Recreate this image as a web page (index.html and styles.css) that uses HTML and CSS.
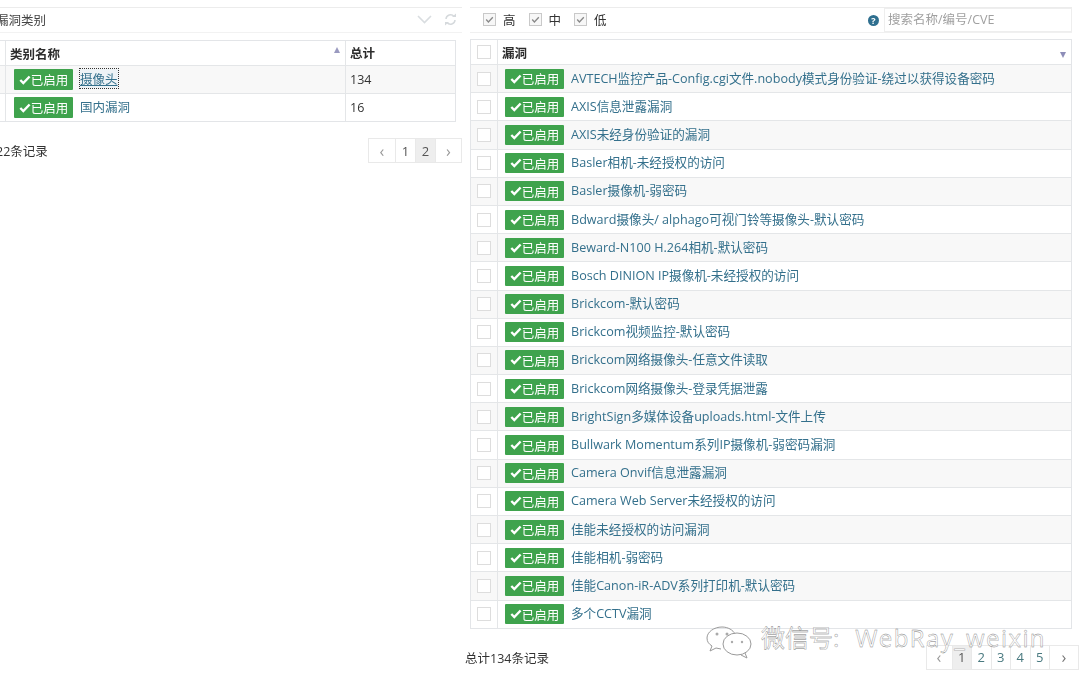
FILE: index.html
```html
<!DOCTYPE html>
<html lang="zh">
<head>
<meta charset="utf-8">
<title>漏洞类别</title>
<link rel="stylesheet" href="styles.css">
</head>
<body>
<div class="page">
  <section class="left">
    <div class="panel-head">
      <span class="panel-title">漏洞类别</span>
      <span class="tools">
        <svg class="ico" width="15" height="9" viewBox="0 0 15 9"><path d="M1 1l6.5 6.5L14 1" fill="none" stroke="#d9dde0" stroke-width="1.6"/></svg>
        <svg class="ico" width="13" height="13" viewBox="0 0 13 13"><path d="M2 6a4.5 4.5 0 0 1 8-2.5M11 7a4.5 4.5 0 0 1-8 2.5" fill="none" stroke="#d5d9dc" stroke-width="1.5"/><path d="M8 4h4V.5zM5 9H1v3.5z" fill="#d5d9dc"/></svg>
      </span>
    </div>
    <div class="cat-table">
      <div class="cat-row head">
        <div class="c0"></div>
        <div class="c1"><b>类别名称</b><i class="sort-up"></i></div>
        <div class="c2"><b>总计</b></div>
      </div>
      <div class="cat-row odd">
        <div class="c0"></div>
        <div class="c1"><span class="badge"><svg class="chk" viewBox="0 0 12 10"><path d="M1.3 5l3 3 6.3-6.5" fill="none" stroke="#fff" stroke-width="2.4"/></svg>已启用</span><a class="link focus">摄像头</a></div>
        <div class="c2">134</div>
      </div>
      <div class="cat-row">
        <div class="c0"></div>
        <div class="c1"><span class="badge"><svg class="chk" viewBox="0 0 12 10"><path d="M1.3 5l3 3 6.3-6.5" fill="none" stroke="#fff" stroke-width="2.4"/></svg>已启用</span><a class="link">国内漏洞</a></div>
        <div class="c2">16</div>
      </div>
    </div>
    <div class="foot left-foot">
      <span class="total">22条记录</span>
      <div class="pager">
        <span class="pg arrow">‹</span><span class="pg">1</span><span class="pg on">2</span><span class="pg arrow">›</span>
      </div>
    </div>
  </section>

  <section class="right">
    <div class="filter">
      <label class="lv"><span class="cb"><svg viewBox="0 0 10 10"><path d="M2 5l2 2.2L8 3" fill="none" stroke="#888" stroke-width="1.2"/></svg></span>高</label>
      <label class="lv"><span class="cb"><svg viewBox="0 0 10 10"><path d="M2 5l2 2.2L8 3" fill="none" stroke="#888" stroke-width="1.2"/></svg></span>中</label>
      <label class="lv"><span class="cb"><svg viewBox="0 0 10 10"><path d="M2 5l2 2.2L8 3" fill="none" stroke="#888" stroke-width="1.2"/></svg></span>低</label>
      <span class="help">?</span>
      <div class="search">搜索名称/编号/CVE</div>
    </div>
    <div class="vuln-table">
      <div class="v-row head"><div class="v0"><span class="box"></span></div><div class="v1"><b>漏洞</b><i class="sort-down"></i></div></div>
      <div class="v-row odd"><div class="v0"><span class="box"></span></div><div class="v1"><span class="badge"><svg class="chk" viewBox="0 0 12 10"><path d="M1.3 5l3 3 6.3-6.5" fill="none" stroke="#fff" stroke-width="2.4"/></svg>已启用</span><a class="link">AVTECH监控产品-Config.cgi文件.nobody模式身份验证-绕过以获得设备密码</a></div></div>
      <div class="v-row"><div class="v0"><span class="box"></span></div><div class="v1"><span class="badge"><svg class="chk" viewBox="0 0 12 10"><path d="M1.3 5l3 3 6.3-6.5" fill="none" stroke="#fff" stroke-width="2.4"/></svg>已启用</span><a class="link">AXIS信息泄露漏洞</a></div></div>
      <div class="v-row odd"><div class="v0"><span class="box"></span></div><div class="v1"><span class="badge"><svg class="chk" viewBox="0 0 12 10"><path d="M1.3 5l3 3 6.3-6.5" fill="none" stroke="#fff" stroke-width="2.4"/></svg>已启用</span><a class="link">AXIS未经身份验证的漏洞</a></div></div>
      <div class="v-row"><div class="v0"><span class="box"></span></div><div class="v1"><span class="badge"><svg class="chk" viewBox="0 0 12 10"><path d="M1.3 5l3 3 6.3-6.5" fill="none" stroke="#fff" stroke-width="2.4"/></svg>已启用</span><a class="link">Basler相机-未经授权的访问</a></div></div>
      <div class="v-row odd"><div class="v0"><span class="box"></span></div><div class="v1"><span class="badge"><svg class="chk" viewBox="0 0 12 10"><path d="M1.3 5l3 3 6.3-6.5" fill="none" stroke="#fff" stroke-width="2.4"/></svg>已启用</span><a class="link">Basler摄像机-弱密码</a></div></div>
      <div class="v-row"><div class="v0"><span class="box"></span></div><div class="v1"><span class="badge"><svg class="chk" viewBox="0 0 12 10"><path d="M1.3 5l3 3 6.3-6.5" fill="none" stroke="#fff" stroke-width="2.4"/></svg>已启用</span><a class="link">Bdward摄像头/ alphago可视门铃等摄像头-默认密码</a></div></div>
      <div class="v-row odd"><div class="v0"><span class="box"></span></div><div class="v1"><span class="badge"><svg class="chk" viewBox="0 0 12 10"><path d="M1.3 5l3 3 6.3-6.5" fill="none" stroke="#fff" stroke-width="2.4"/></svg>已启用</span><a class="link">Beward-N100 H.264相机-默认密码</a></div></div>
      <div class="v-row"><div class="v0"><span class="box"></span></div><div class="v1"><span class="badge"><svg class="chk" viewBox="0 0 12 10"><path d="M1.3 5l3 3 6.3-6.5" fill="none" stroke="#fff" stroke-width="2.4"/></svg>已启用</span><a class="link">Bosch DINION IP摄像机-未经授权的访问</a></div></div>
      <div class="v-row odd"><div class="v0"><span class="box"></span></div><div class="v1"><span class="badge"><svg class="chk" viewBox="0 0 12 10"><path d="M1.3 5l3 3 6.3-6.5" fill="none" stroke="#fff" stroke-width="2.4"/></svg>已启用</span><a class="link">Brickcom-默认密码</a></div></div>
      <div class="v-row"><div class="v0"><span class="box"></span></div><div class="v1"><span class="badge"><svg class="chk" viewBox="0 0 12 10"><path d="M1.3 5l3 3 6.3-6.5" fill="none" stroke="#fff" stroke-width="2.4"/></svg>已启用</span><a class="link">Brickcom视频监控-默认密码</a></div></div>
      <div class="v-row odd"><div class="v0"><span class="box"></span></div><div class="v1"><span class="badge"><svg class="chk" viewBox="0 0 12 10"><path d="M1.3 5l3 3 6.3-6.5" fill="none" stroke="#fff" stroke-width="2.4"/></svg>已启用</span><a class="link">Brickcom网络摄像头-任意文件读取</a></div></div>
      <div class="v-row"><div class="v0"><span class="box"></span></div><div class="v1"><span class="badge"><svg class="chk" viewBox="0 0 12 10"><path d="M1.3 5l3 3 6.3-6.5" fill="none" stroke="#fff" stroke-width="2.4"/></svg>已启用</span><a class="link">Brickcom网络摄像头-登录凭据泄露</a></div></div>
      <div class="v-row odd"><div class="v0"><span class="box"></span></div><div class="v1"><span class="badge"><svg class="chk" viewBox="0 0 12 10"><path d="M1.3 5l3 3 6.3-6.5" fill="none" stroke="#fff" stroke-width="2.4"/></svg>已启用</span><a class="link">BrightSign多媒体设备uploads.html-文件上传</a></div></div>
      <div class="v-row"><div class="v0"><span class="box"></span></div><div class="v1"><span class="badge"><svg class="chk" viewBox="0 0 12 10"><path d="M1.3 5l3 3 6.3-6.5" fill="none" stroke="#fff" stroke-width="2.4"/></svg>已启用</span><a class="link">Bullwark Momentum系列IP摄像机-弱密码漏洞</a></div></div>
      <div class="v-row odd"><div class="v0"><span class="box"></span></div><div class="v1"><span class="badge"><svg class="chk" viewBox="0 0 12 10"><path d="M1.3 5l3 3 6.3-6.5" fill="none" stroke="#fff" stroke-width="2.4"/></svg>已启用</span><a class="link">Camera Onvif信息泄露漏洞</a></div></div>
      <div class="v-row"><div class="v0"><span class="box"></span></div><div class="v1"><span class="badge"><svg class="chk" viewBox="0 0 12 10"><path d="M1.3 5l3 3 6.3-6.5" fill="none" stroke="#fff" stroke-width="2.4"/></svg>已启用</span><a class="link">Camera Web Server未经授权的访问</a></div></div>
      <div class="v-row odd"><div class="v0"><span class="box"></span></div><div class="v1"><span class="badge"><svg class="chk" viewBox="0 0 12 10"><path d="M1.3 5l3 3 6.3-6.5" fill="none" stroke="#fff" stroke-width="2.4"/></svg>已启用</span><a class="link">佳能未经授权的访问漏洞</a></div></div>
      <div class="v-row"><div class="v0"><span class="box"></span></div><div class="v1"><span class="badge"><svg class="chk" viewBox="0 0 12 10"><path d="M1.3 5l3 3 6.3-6.5" fill="none" stroke="#fff" stroke-width="2.4"/></svg>已启用</span><a class="link">佳能相机-弱密码</a></div></div>
      <div class="v-row odd"><div class="v0"><span class="box"></span></div><div class="v1"><span class="badge"><svg class="chk" viewBox="0 0 12 10"><path d="M1.3 5l3 3 6.3-6.5" fill="none" stroke="#fff" stroke-width="2.4"/></svg>已启用</span><a class="link">佳能Canon-iR-ADV系列打印机-默认密码</a></div></div>
      <div class="v-row"><div class="v0"><span class="box"></span></div><div class="v1"><span class="badge"><svg class="chk" viewBox="0 0 12 10"><path d="M1.3 5l3 3 6.3-6.5" fill="none" stroke="#fff" stroke-width="2.4"/></svg>已启用</span><a class="link">多个CCTV漏洞</a></div></div>
    </div>
    <div class="foot right-foot">
      <span class="total">总计134条记录</span>
      <div class="pager">
        <span class="pg arrow">‹</span><span class="pg on">1</span><span class="pg num">2</span><span class="pg num">3</span><span class="pg num">4</span><span class="pg num">5</span><span class="pg arrow dark">›</span>
      </div>
    </div>
  </section>
</div>
<div class="watermark">
  <svg class="wm-icon" width="46" height="34" viewBox="0 0 46 34"><path d="M16 2C8 2 1 7 1 13c0 4 2 6 5 8l-2 5 6-3 5 1" fill="none" stroke="#9a9a9a" stroke-width="1"/><path d="M16 2c6 0 11 3 13 7" fill="none" stroke="#9a9a9a" stroke-width="1"/><ellipse cx="31" cy="19" rx="14" ry="11" fill="rgba(255,255,255,.6)" stroke="#9a9a9a" stroke-width="1"/><path d="M39 28l2 5-6-3" fill="none" stroke="#9a9a9a"/><circle cx="11" cy="9" r="1.5" fill="#aaa"/><circle cx="21" cy="9" r="1.5" fill="#aaa"/><circle cx="26" cy="17" r="1.2" fill="#aaa"/><circle cx="36" cy="17" r="1.2" fill="#aaa"/></svg>
  <span class="wm-text">微信号:<span class="wm-latin">WebRay_weixin</span></span>
</div>
</body>
</html>
```
FILE: styles.css
```css
* { box-sizing: border-box; }
html, body { margin: 0; height: 690px; overflow: hidden; background: #fff; }
body {
  position: relative;
  font-family: "Open Sans", "Noto Sans CJK SC", sans-serif;
  font-size: 13px;
  color: #333;
}
.page { display: flex; align-items: flex-start; width: 1080px; padding-top: 7px; filter: blur(.35px); }

.left { width: 476px; margin-left: -14px; flex: none; }
.panel-head {
  display: flex; align-items: center; justify-content: space-between;
  height: 26px; padding: 0 5px 2px 10px;
  border-top: 1px solid #ececec; border-bottom: 1px solid #f2f2f2;
}
.panel-title { font-size: 12.5px; color: #444; }
.tools { display: flex; align-items: center; gap: 12px; }
.ico { display: block; }

.cat-table { margin-top: 7px; border: 1px solid #e3e5e8; border-width: 1px 1px 1px 0; width: 470px; }
.cat-row { display: flex; height: 28px; }
.cat-row + .cat-row { border-top: 1px solid #e4e6e8; }
.cat-row.head { height: 24px; }
.cat-row.odd { background: #f8f8f8; }
.c0 { width: 20px; border-right: 1px solid #e4e6e8; }
.c1 { width: 340px; display: flex; align-items: center; padding-left: 4px; position: relative; border-right: 1px solid #e4e6e8; }
.head .c1 { padding-left: 4px; }
.c2 { flex: 1; display: flex; align-items: center; padding: 0 0 1px 4px; font-size: 12.5px; }
b { font-weight: 700; font-size: 12.5px; color: #2c2c2c; }

.sort-up, .sort-down { position: absolute; width: 0; height: 0; border-left: 3.5px solid transparent; border-right: 3.5px solid transparent; }
.sort-up { right: 5px; top: 6px; border-bottom: 6px solid #9a9ac0; }
.sort-down { right: 5px; top: 12px; border-top: 6px solid #8d8db8; }

.badge {
  display: inline-flex; align-items: center; justify-content: center;
  height: 21px; width: 60px; background: #3fa34d; color: #fff;
  font-size: 12.5px; border-radius: 1px; flex: none;
}
.chk { width: 12px; height: 10px; }
.c1 .badge { margin-left: 4px; width: 59px; }
.link { color: #34708c; font-size: 12.5px; margin: 0 0 2px 7px; white-space: nowrap; }
.link.focus { outline: 1px dotted #333; text-decoration: underline; background: #eef3f6; }

.foot { display: flex; align-items: center; justify-content: space-between; }
.left-foot { margin-top: 16px; padding-left: 10px; width: 476px; }
.total { font-size: 12.5px; color: #333; }
.pager { display: flex; border: 1px solid #e9e9e9; height: 25px; }
.pg { display: flex; align-items: center; justify-content: center; width: 20px; border-left: 1px solid #e9e9e9; color: #555; font-size: 13px; }
.pg:first-child { border-left: 0; }
.pg.on { background: #eee; }
.pg.arrow { width: 26px; color: #999; font-size: 16px; }
.pg.arrow.dark { color: #777; width: 29px; }
.pg.num { color: #4a7a80; }
.right-foot .pg { width: 19.5px; }
.right-foot .pg.arrow { width: 25px; }
.right-foot .pg.arrow.dark { width: 29px; }

.right { width: 610px; margin-left: 8px; flex: none; }
.filter {
  display: flex; align-items: center; height: 26px; width: 602px; padding-left: 13px;
  border-top: 1px solid #ececec; border-bottom: 1px solid #f0f0f0; font-size: 12.5px; margin-bottom: 6px;
}
.lv { display: flex; align-items: center; gap: 7px; margin: 0 13px 2px 0; }
.cb { width: 13px; height: 13px; border: 1px solid #c9c9c9; background: #f7f7f7; display: block; }
.cb svg { display: block; width: 11px; height: 11px; }
.help {
  width: 11px; height: 11px; border-radius: 50%; background: #2f6f8f; color: #fff;
  font-size: 9px; font-weight: 700; line-height: 11px; text-align: center;
  margin-left: auto; margin-right: 5px;
}
.search {
  width: 188px; height: 24px; border: 1px solid #eee; color: #a0a0a0;
  font-size: 12.5px; line-height: 22px; padding-left: 3px;
}
.vuln-table { border: 1px solid #e3e5e8; width: 602px; }
.v-row { display: flex; height: 28.2px; }
.v-row + .v-row { border-top: 1px solid #e4e6e8; }
.v-row.head { height: 24px; }
.v-row.odd { background: #f8f8f8; }
.v0 { width: 27px; flex: none; display: flex; align-items: center; justify-content: center; border-right: 1px solid #e4e6e8; }
.box { width: 14px; height: 14px; border: 1px solid #ddd; background: #fff; display: block; }
.v1 { flex: 1; display: flex; align-items: center; padding-left: 7px; position: relative; }
.head .v1 { padding-left: 4px; }
.v1 .badge { height: 20px; width: 59px; }
.v1 .link { margin: 0 0 3px 7px; font-size: 12.6px; }

.right-foot { margin: 16px 0 0 -5px; width: 614px; }

.watermark { position: absolute; left: 706px; top: 623px; display: flex; align-items: flex-start; gap: 9px; }
.wm-icon { margin-top: 2px; flex: none; }
.wm-text {
  font-size: 24px; line-height: 30px; white-space: nowrap;
  color: rgba(255,255,255,.55); -webkit-text-stroke: .35px #777;
}
.wm-latin { margin-left: 16px; letter-spacing: 1.4px; }
```
